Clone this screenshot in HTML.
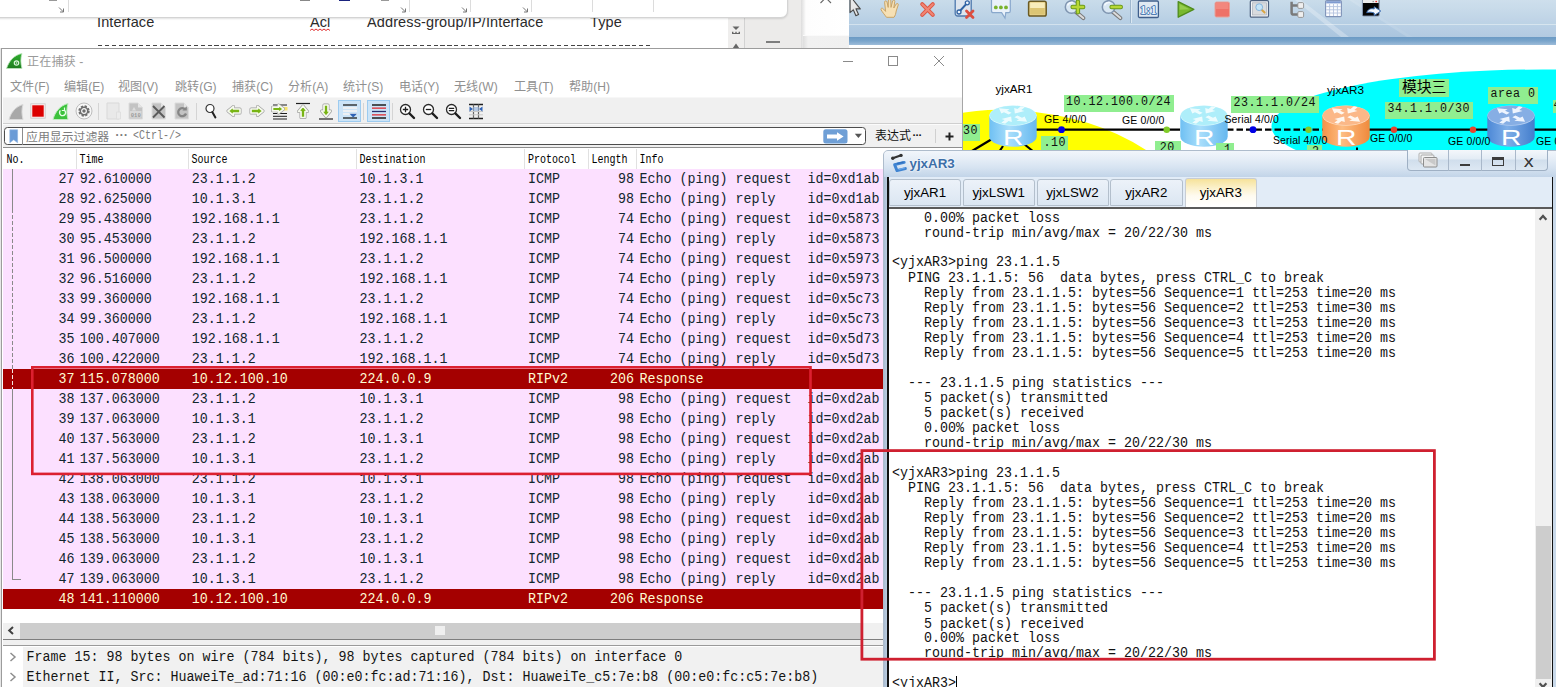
<!DOCTYPE html><html><head><meta charset="utf-8"><title>capture</title><style>
*{box-sizing:border-box;margin:0;padding:0}
html,body{width:1556px;height:687px;overflow:hidden;background:#fff}
body{position:relative;font-family:"Liberation Sans",sans-serif;font-size:12px;color:#000}
.a{position:absolute}
.mono{font-family:"Liberation Mono",monospace}
.sans{font-family:"Liberation Sans",sans-serif}
.serif{font-family:"Liberation Serif",serif}
/* packet list */
.pl{position:absolute;left:3px;top:169px;width:880px;height:440px;background:#fce0ff;overflow:hidden}
.row{position:absolute;left:0;width:880px;height:20px;font-family:"Liberation Mono",monospace;font-size:13.3333px;line-height:20px;color:#12272e;white-space:pre}
.row.red{background:#a40000;color:#fffbd2}
.row span{position:absolute;top:1px;height:20px;transform:scaleY(1.0875);transform-origin:0 50%}
.hd{position:absolute;top:150.3px;height:19px;font-family:"Liberation Mono",monospace;font-size:10px;line-height:19px;color:#000;white-space:pre;transform-origin:0 50%;transform:scaleY(1.2)}
.term{position:absolute;left:892px;top:211px;font-family:"Liberation Mono",monospace;font-size:13.3333px;line-height:13.7931px;color:#111;white-space:pre;transform:scaleY(1.0875);transform-origin:0 0}
.lbl{position:absolute;background:#90ee90;font-family:"Liberation Mono",monospace;color:#101010;white-space:pre}
.ifn{position:absolute;font-family:"Liberation Sans",sans-serif;font-size:10.5px;color:#000;white-space:pre;line-height:12px}
.dev{position:absolute;font-family:"Liberation Sans",sans-serif;font-size:11.7px;color:#000;white-space:pre;line-height:13px}
.tab{position:absolute;top:179px;height:27px;border:1px solid #b3bfcc;border-radius:3px 3px 0 0;background:linear-gradient(#ecf2f9,#dbe6f2);font-family:"Liberation Sans",sans-serif;font-size:13.33px;line-height:25px;text-align:center;color:#000}
</style></head><body>
<!-- sec_top -->
<div class="a" style="left:0;top:0;width:849px;height:48px;background:#ecebea"></div><div class="a" style="left:0;top:17px;width:728px;height:31px;background:#fff"></div><div class="a" style="left:728px;top:17px;width:17px;height:31px;background:#efeeed;border-right:1px solid #d2d2d2"></div><div class="a" style="left:801px;top:0;width:48px;height:48px;background:linear-gradient(90deg,#dcdcdc 0,#fdfdfd 5px,#fff 100%)"></div><div class="a" style="left:803px;top:35px;width:46px;height:13px;background:linear-gradient(90deg,#dedede 0,#f1f1f1 5px,#f0f0f0 100%);border-top:1px solid #fafafa"></div><div class="a" style="left:-2px;top:-2px;width:790px;height:19.5px;background:#fff;border:1px solid #d4d4d4;border-radius:0 0 7px 0;box-shadow:0 1px 2px rgba(0,0,0,.12)"></div><div class="a" style="left:68px;top:0;width:1px;height:12px;background:#dcdcdc"></div><div class="a" style="left:409px;top:0;width:1px;height:12px;background:#dcdcdc"></div><div class="a" style="left:470px;top:0;width:1px;height:12px;background:#dcdcdc"></div><div class="a" style="left:531px;top:0;width:1px;height:12px;background:#dcdcdc"></div><div class="a" style="left:592px;top:0;width:1px;height:12px;background:#dcdcdc"></div><div class="a" style="left:653px;top:0;width:1px;height:12px;background:#dcdcdc"></div><svg class="a" style="left:58px;top:7px" width="7" height="6" viewBox="0 0 7 6"><path d="M1 0.5L5.5 5M5.5 1.5V5H2" stroke="#777" stroke-width="1" fill="none"/></svg><svg class="a" style="left:400px;top:7px" width="7" height="6" viewBox="0 0 7 6"><path d="M1 0.5L5.5 5M5.5 1.5V5H2" stroke="#777" stroke-width="1" fill="none"/></svg><svg class="a" style="left:461px;top:7px" width="7" height="6" viewBox="0 0 7 6"><path d="M1 0.5L5.5 5M5.5 1.5V5H2" stroke="#777" stroke-width="1" fill="none"/></svg><svg class="a" style="left:522px;top:7px" width="7" height="6" viewBox="0 0 7 6"><path d="M1 0.5L5.5 5M5.5 1.5V5H2" stroke="#777" stroke-width="1" fill="none"/></svg><div class="a" style="left:49px;top:0;width:8px;height:1px;background:#999"></div><div class="a" style="left:300px;top:0;width:10px;height:1px;background:#888"></div><div class="a" style="left:339px;top:0;width:11px;height:1px;background:#1a237e"></div><div class="a" style="left:381px;top:0;width:8px;height:1px;background:#999"></div><div class="a sans" style="left:0;top:18px;width:728px;height:30px;overflow:hidden;font-size:14.5px;letter-spacing:0.1px;color:#2b2b2b;line-height:16px"><span class="a" style="left:97px;top:-4px">Interface</span><span class="a" style="left:310px;top:-4px">Acl</span><span class="a" style="left:367px;top:-4px;letter-spacing:0.12px">Address-group/IP/Interface</span><span class="a" style="left:590px;top:-4px">Type</span></div><svg class="a" style="left:310px;top:28px" width="22" height="4" viewBox="0 0 22 4"><path d="M0 2.5 L2 1 L4 2.5 L6 1 L8 2.5 L10 1 L12 2.5 L14 1 L16 2.5 L18 1 L20 2.5" stroke="#e03030" stroke-width="1" fill="none"/></svg><div class="a" style="left:98px;top:44.5px;width:552px;height:1.3px;background:repeating-linear-gradient(90deg,#444 0,#444 4.2px,transparent 4.2px,transparent 6.85px)"></div><svg class="a" style="left:731px;top:25px" width="10" height="24" viewBox="0 0 10 24"><path d="M1.5 1.5h7L5 5z" fill="#666"/><path d="M1 9V6.8h1.4V8H4.3V6.8h1.4V8H7.6V6.8H9V9z" fill="#666"/><path d="M5 18.5L8.5 23.5h-7z" fill="#666"/></svg><div class="a" style="left:766px;top:41px;width:14px;height:1.6px;background:#7d7d7d"></div><svg class="a" style="left:819px;top:0" width="14" height="4" viewBox="0 0 14 4"><path d="M1.5 3L5 -0.5M12 3L8.5 -0.5" stroke="#666" stroke-width="1.1" fill="none"/></svg>
<!-- sec_ensp -->
<div class="a" style="left:849px;top:0;width:707px;height:160px;background:#fff;overflow:hidden"><div class="a" style="left:0;top:0;width:707px;height:25px;background:linear-gradient(#c9dcea,#bdd3e6 60%,#b4cde3)"></div><div class="a" style="left:0;top:24px;width:707px;height:1px;background:#d3e2ee"></div><div class="a" style="left:0;top:25px;width:707px;height:12px;background:linear-gradient(#b3cce3,#aac5de)"></div><div class="a" style="left:0;top:37px;width:707px;height:8px;background:linear-gradient(#6b9ac4,#7aa5cb 50%,#9dbcd9)"></div><svg class="a" style="left:440px;top:0" width="267" height="37" viewBox="0 0 267 37"><path d="M6 0H12L60 37H52z" fill="#fff" opacity=".28"/><path d="M60 0H64L124 37H118z" fill="#fff" opacity=".15"/><path d="M64 0H267V37H124z" fill="#fff" opacity=".1"/></svg><div class="a" style="left:280.5px;top:0;width:1px;height:23px;background:#9fb8cf"></div><div class="a" style="left:281.5px;top:0;width:1px;height:23px;background:#dbe8f2"></div><svg class="a" style="left:0px;top:0" width="14" height="19" viewBox="0 0 14 19"><path d="M1 -4V12.6L4.3 9.8L6.9 15.8L9.6 14.6L7 8.9H11.3z" fill="#cfcfcf" stroke="#4a4a4a" stroke-width="1.1" stroke-linejoin="round"/><path d="M2 -2V10.4L4.6 8.2L7.4 14.4L8.3 14L5.5 7.8H8.8z" fill="#e9e9e9"/></svg><svg class="a" style="left:30px;top:0" width="22" height="19" viewBox="0 0 22 19"><path d="M7.5 17.3C5.5 14.5 3.2 12 2 9.6C1.7 8.2 3.2 7.6 4.3 8.8L6.6 11.4L5.6 2.2C5.5 .6 7.6 .3 8 1.9L9.2 7.4L9.4 -.5C9.5 -2 11.7 -2 11.8 -.5L12 7.4L13.6 1C14 -.4 16 0 15.8 1.5L14.8 8L17.2 4C18 2.8 19.8 3.7 19.2 5.1L17.2 11C16.8 14 16.2 15.6 15 17.3z" fill="#f6e0b4" stroke="#c9a467" stroke-width="1"/></svg><svg class="a" style="left:70px;top:1px" width="18" height="18" viewBox="0 0 18 18"><path d="M3.2 3.2L13.8 13.8M13.8 3.2L3.2 13.8" stroke="#dd5543" stroke-width="4" stroke-linecap="round"/><path d="M3.2 3.2L13.8 13.8M13.8 3.2L3.2 13.8" stroke="#f08674" stroke-width="2" stroke-linecap="round"/></svg><svg class="a" style="left:105px;top:0" width="22" height="20" viewBox="0 0 22 20"><rect x="1.2" y="-2" width="16" height="18" rx="2.5" fill="#dde5ee" stroke="#4d78ad" stroke-width="1.3"/><path d="M5 12L13.3 2.8" stroke="#2f62a3" stroke-width="2"/><circle cx="5" cy="12" r="2" fill="#eef4fb" stroke="#2f62a3" stroke-width="1.3"/><circle cx="13.3" cy="2.8" r="2" fill="#eef4fb" stroke="#2f62a3" stroke-width="1.3"/><path d="M12.5 11L19 17.5M19 11L12.5 17.5" stroke="#dc4e40" stroke-width="2.8" stroke-linecap="round"/></svg><svg class="a" style="left:141px;top:0" width="23" height="20" viewBox="0 0 23 20"><path d="M1.5 -2H20.3V11Q20.3 12.7 18.6 12.7H15.8L15 18L11.6 12.7H3.2Q1.5 12.7 1.5 11z" fill="#e9f1fa" stroke="#89a8cc" stroke-width="1.2"/><circle cx="5.8" cy="7.4" r="1.9" fill="#7ab32e"/><circle cx="10.9" cy="7.4" r="1.9" fill="#7ab32e"/><circle cx="16" cy="7.4" r="1.9" fill="#7ab32e"/></svg><svg class="a" style="left:178px;top:0" width="22" height="19" viewBox="0 0 22 19"><rect x="1.6" y="1.3" width="17.6" height="14.8" rx="1.8" fill="#e8d38c" stroke="#6b5a22" stroke-width="1.5"/><rect x="3.2" y="2.8" width="14.4" height="5.2" fill="#f7ecbb"/><rect x="3.2" y="8" width="14.4" height="6.4" fill="#dcc574"/></svg><svg class="a" style="left:215px;top:0" width="26" height="22" viewBox="0 0 26 22"><path d="M11.6 11.6L19.3 18" stroke="#7a7a7a" stroke-width="4.2" stroke-linecap="round"/><path d="M11.6 11.6L19.3 18" stroke="#dcdcdc" stroke-width="2" stroke-linecap="round"/><circle cx="7.6" cy="7" r="6.3" fill="#d9e7f3" stroke="#7f95b0" stroke-width="1.5"/><path d="M3.5 5.5A4.6 4.6 0 0 1 9 2.6" stroke="#f4f9fd" stroke-width="1.6" fill="none"/><path d="M8.6 7H19.2M13.9 1.7V12.3" stroke="#6a9a1e" stroke-width="4.4" stroke-linecap="round"/><path d="M8.6 7H19.2M13.9 1.7V12.3" stroke="#b7d736" stroke-width="2.4" stroke-linecap="round"/></svg><svg class="a" style="left:251.5999999999999px;top:0" width="26" height="22" viewBox="0 0 26 22"><path d="M11.6 11.6L19.3 18" stroke="#7a7a7a" stroke-width="4.2" stroke-linecap="round"/><path d="M11.6 11.6L19.3 18" stroke="#dcdcdc" stroke-width="2" stroke-linecap="round"/><circle cx="7.6" cy="7" r="6.3" fill="#d9e7f3" stroke="#7f95b0" stroke-width="1.5"/><path d="M3.5 5.5A4.6 4.6 0 0 1 9 2.6" stroke="#f4f9fd" stroke-width="1.6" fill="none"/><path d="M10.6 7H19.8" stroke="#6a9a1e" stroke-width="4.4" stroke-linecap="round"/><path d="M10.6 7H19.8" stroke="#b7d736" stroke-width="2.4" stroke-linecap="round"/></svg><svg class="a" style="left:288px;top:0" width="24" height="20" viewBox="0 0 24 20"><rect x="1.4" y="1" width="20" height="16.5" rx="1.2" fill="#e0e9f3" stroke="#3f5f8c" stroke-width="1.3"/><text x="11.4" y="13.6" font-family="Liberation Serif, serif" font-weight="bold" font-size="12.5" text-anchor="middle" fill="#2f66a8" stroke="#2f66a8" stroke-width="1.5" stroke-linejoin="round">1:1</text><text x="11.4" y="13.6" font-family="Liberation Serif, serif" font-weight="bold" font-size="12.5" text-anchor="middle" fill="#eaf3fc">1:1</text></svg><svg class="a" style="left:327px;top:0" width="20" height="20" viewBox="0 0 20 20"><path d="M2.2 1.6L17.8 9.4L2.2 17.2z" fill="#79b82e" stroke="#4f8c1c" stroke-width="1.3" stroke-linejoin="round"/><path d="M3.6 4L13.5 9.2L3.6 9.8z" fill="#9fd45a" opacity=".75"/></svg><svg class="a" style="left:365px;top:1px" width="17" height="18" viewBox="0 0 17 18"><rect x="1" y="1" width="14.5" height="15" rx="1.5" fill="#ee7268" stroke="#e7a39b" stroke-width="1"/><rect x="2" y="2" width="12.5" height="6" fill="#f28c82" opacity=".8"/></svg><svg class="a" style="left:400px;top:0" width="21" height="20" viewBox="0 0 21 20"><rect x="1.3" y=".6" width="18.2" height="16.6" rx="1.2" fill="#f4f6f9" stroke="#4d617f" stroke-width="1.2"/><rect x="3.4" y="2.8" width="14" height="12.2" fill="#d9dbde" stroke="#a9afb8" stroke-width=".7"/><path d="M12.4 9.6L15.6 12.6" stroke="#d9a441" stroke-width="2" stroke-linecap="round"/><circle cx="10.2" cy="7.2" r="3.4" fill="#c4e4f8" stroke="#86b4dc" stroke-width="1"/></svg><svg class="a" style="left:439px;top:0" width="20" height="20" viewBox="0 0 20 20"><path d="M3.6 1.8V12.5Q3.6 14.6 5.7 14.6H10.5M3.6 5.6H10.5" stroke="#7a7a7a" stroke-width="2.5" fill="none"/><rect x="9.8" y="2.6" width="5.8" height="5.8" rx="1.2" fill="#efefef" stroke="#8f8f8f" stroke-width=".9"/><rect x="9.8" y="11.6" width="5.8" height="5.8" rx="1.2" fill="#efefef" stroke="#8f8f8f" stroke-width=".9"/></svg><svg class="a" style="left:475px;top:0" width="20" height="20" viewBox="0 0 20 20"><rect x="1.6" y=".6" width="15.8" height="16" rx="1.2" fill="#fbfcfe" stroke="#7f93b8" stroke-width="1.1"/><rect x="2.2" y="1.2" width="14.6" height="2.2" fill="#7f9bd0"/><path d="M5.6 4V16M9.5 4V16M13.4 4V16M2.2 6.6H16.8M2.2 9.8H16.8M2.2 13H16.8" stroke="#b4c3df" stroke-width=".9"/></svg><svg class="a" style="left:512px;top:0" width="22" height="20" viewBox="0 0 22 20"><rect x="1.4" y="-.5" width="16.8" height="16.6" rx="1.2" fill="#050505" stroke="#8a9cb8" stroke-width="1"/><rect x="1.9" y="0" width="15.8" height="3" fill="#ececec"/><rect x="14.4" y=".9" width="1.6" height="1.3" fill="#e33"/><rect x="11.6" y=".9" width="1.2" height="1.3" fill="#888"/><path d="M5.8 12.8C6.6 9.2 10 8 13.2 9V6.8L19.8 11L13.2 15.6V13C10.4 12 7.8 11.8 5.8 12.8z" fill="#f4f8fd" stroke="#3d6fb3" stroke-width="1"/></svg><svg class="a" style="left:0;top:45px" width="707" height="115" viewBox="849 45 707 115"><path d="M900 160V130Q960 108 1007 110Q1090 113 1146 150V160z" fill="#ffff00"/><ellipse cx="1543" cy="126.5" rx="271.5" ry="57" fill="#00ffff"/><path d="M1036 129.7H1180" stroke="#000" stroke-width="2.2"/><path d="M1227 129.7H1323" stroke="#000" stroke-width="2.2" stroke-dasharray="6.5 3"/><path d="M1369 129.7H1556" stroke="#000" stroke-width="2.2"/><path d="M992 139L972 151M1003 146L999 152M1024 144L1034 152" stroke="#000" stroke-width="2.2"/><path d="M1357 147.5V152" stroke="#000" stroke-width="2"/><circle cx="1061.5" cy="129.7" r="3.4" fill="#0000e6"/><circle cx="1166.7" cy="129.7" r="3.2" fill="#80cc28"/><circle cx="1253" cy="129.7" r="3.4" fill="#0000e6"/><circle cx="1308.5" cy="129.7" r="3.2" fill="#80cc28"/><circle cx="1394" cy="129.7" r="3.2" fill="#e8432e"/><circle cx="1473" cy="129.7" r="3.2" fill="#e8432e"/></svg><svg class="a" style="left:140px;top:104.5px" width="48" height="43" viewBox="0 0 48 43"><defs><linearGradient id="glb1" x1="0" x2="1" y1="0" y2="0"><stop offset="0" stop-color="#6fc0f3"/><stop offset="0.42" stop-color="#a8defb"/><stop offset="1" stop-color="#66b8ef"/></linearGradient></defs><path d="M0.3 10.5V31.5A23.7 10.3 0 0 0 47.7 31.5V10.5z" fill="url(#glb1)"/><ellipse cx="24" cy="10.6" rx="23.7" ry="10.1" fill="#d5f8fd"/><ellipse cx="24" cy="10.3" rx="23.2" ry="9.6" fill="#aeeefa"/><g transform="translate(24,10) scale(20,9.8) rotate(-8)" fill="#effdff" opacity=".97"><path transform="rotate(232)" d="M.2 -.11H.52V-.3L.98 0L.52 .3V.11H.2z"/><path transform="rotate(52)" d="M.2 -.11H.52V-.3L.98 0L.52 .3V.11H.2z"/><path transform="rotate(308)" d="M.98 -.11H.64V-.3L.18 0L.64 .3V.11H.98z"/><path transform="rotate(128)" d="M.98 -.11H.64V-.3L.18 0L.64 .3V.11H.98z"/></g><text transform="translate(24.3,40.3) scale(1.27,1)" x="0" y="0" font-family="Liberation Sans, sans-serif" font-size="22.3" fill="#fff" text-anchor="middle">R</text></svg><svg class="a" style="left:331px;top:104.5px" width="48" height="43" viewBox="0 0 48 43"><defs><linearGradient id="glb2" x1="0" x2="1" y1="0" y2="0"><stop offset="0" stop-color="#6fc0f3"/><stop offset="0.42" stop-color="#a8defb"/><stop offset="1" stop-color="#66b8ef"/></linearGradient></defs><path d="M0.3 10.5V31.5A23.7 10.3 0 0 0 47.7 31.5V10.5z" fill="url(#glb2)"/><ellipse cx="24" cy="10.6" rx="23.7" ry="10.1" fill="#d5f8fd"/><ellipse cx="24" cy="10.3" rx="23.2" ry="9.6" fill="#aeeefa"/><g transform="translate(24,10) scale(20,9.8) rotate(-8)" fill="#effdff" opacity=".97"><path transform="rotate(232)" d="M.2 -.11H.52V-.3L.98 0L.52 .3V.11H.2z"/><path transform="rotate(52)" d="M.2 -.11H.52V-.3L.98 0L.52 .3V.11H.2z"/><path transform="rotate(308)" d="M.98 -.11H.64V-.3L.18 0L.64 .3V.11H.98z"/><path transform="rotate(128)" d="M.98 -.11H.64V-.3L.18 0L.64 .3V.11H.98z"/></g><text transform="translate(24.3,40.3) scale(1.27,1)" x="0" y="0" font-family="Liberation Sans, sans-serif" font-size="22.3" fill="#fff" text-anchor="middle">R</text></svg><svg class="a" style="left:473px;top:104.5px" width="48" height="43" viewBox="0 0 48 43"><defs><linearGradient id="gor3" x1="0" x2="1" y1="0" y2="0"><stop offset="0" stop-color="#f59248"/><stop offset="0.42" stop-color="#fdbc82"/><stop offset="1" stop-color="#f08a3c"/></linearGradient></defs><path d="M0.3 10.5V31.5A23.7 10.3 0 0 0 47.7 31.5V10.5z" fill="url(#gor3)"/><ellipse cx="24" cy="10.6" rx="23.7" ry="10.1" fill="#fdd9ba"/><ellipse cx="24" cy="10.3" rx="23.2" ry="9.6" fill="#fbb888"/><g transform="translate(24,10) scale(20,9.8) rotate(-8)" fill="#fffaf4" opacity=".97"><path transform="rotate(232)" d="M.2 -.11H.52V-.3L.98 0L.52 .3V.11H.2z"/><path transform="rotate(52)" d="M.2 -.11H.52V-.3L.98 0L.52 .3V.11H.2z"/><path transform="rotate(308)" d="M.98 -.11H.64V-.3L.18 0L.64 .3V.11H.98z"/><path transform="rotate(128)" d="M.98 -.11H.64V-.3L.18 0L.64 .3V.11H.98z"/></g><text transform="translate(24.3,40.3) scale(1.27,1)" x="0" y="0" font-family="Liberation Sans, sans-serif" font-size="22.3" fill="#fff" text-anchor="middle">R</text></svg><svg class="a" style="left:638px;top:104.5px" width="48" height="43" viewBox="0 0 48 43"><defs><linearGradient id="gbl4" x1="0" x2="1" y1="0" y2="0"><stop offset="0" stop-color="#4c88d6"/><stop offset="0.42" stop-color="#7eaee8"/><stop offset="1" stop-color="#437dcc"/></linearGradient></defs><path d="M0.3 10.5V31.5A23.7 10.3 0 0 0 47.7 31.5V10.5z" fill="url(#gbl4)"/><ellipse cx="24" cy="10.6" rx="23.7" ry="10.1" fill="#b4cdf0"/><ellipse cx="24" cy="10.3" rx="23.2" ry="9.6" fill="#86aee4"/><g transform="translate(24,10) scale(20,9.8) rotate(-8)" fill="#f2f7ff" opacity=".97"><path transform="rotate(232)" d="M.2 -.11H.52V-.3L.98 0L.52 .3V.11H.2z"/><path transform="rotate(52)" d="M.2 -.11H.52V-.3L.98 0L.52 .3V.11H.2z"/><path transform="rotate(308)" d="M.98 -.11H.64V-.3L.18 0L.64 .3V.11H.98z"/><path transform="rotate(128)" d="M.98 -.11H.64V-.3L.18 0L.64 .3V.11H.98z"/></g><text transform="translate(24.3,40.3) scale(1.27,1)" x="0" y="0" font-family="Liberation Sans, sans-serif" font-size="22.3" fill="#fff" text-anchor="middle">R</text></svg><div class="lbl" style="left:111px;top:123.6px;width:20.3px;height:17.2px;font-size:11.6667px;line-height:15.799999999999999px;padding-left:3px;letter-spacing:0.5px;"><span style="display:inline-block;transform:scaleY(1.1);transform-origin:0 55%">30</span></div><div class="lbl" style="left:214.5px;top:94.5px;width:110px;height:17px;font-size:11.6667px;line-height:15.6px;padding-left:2.5px;letter-spacing:0.5px;"><span style="display:inline-block;transform:scaleY(1.1);transform-origin:0 55%">10.12.100.0/24</span></div><div class="lbl" style="left:191.5px;top:136.4px;width:27px;height:17.3px;font-size:11.6667px;line-height:15.9px;padding-left:3px;letter-spacing:0.5px;"><span style="display:inline-block;transform:scaleY(1.1);transform-origin:0 55%">.10</span></div><div class="lbl" style="left:305.79999999999995px;top:140.9px;width:26.5px;height:17.3px;font-size:11.6667px;line-height:15.9px;padding-left:5px;letter-spacing:0.5px;"><span style="display:inline-block;transform:scaleY(1.1);transform-origin:0 55%">20</span></div><div class="lbl" style="left:367px;top:143.3px;width:18px;height:17.3px;font-size:11.6667px;line-height:15.9px;padding-left:8px;letter-spacing:0.5px;"><span style="display:inline-block;transform:scaleY(1.1);transform-origin:0 55%">1</span></div><div class="lbl" style="left:382px;top:96px;width:87.5px;height:17px;font-size:11.6667px;line-height:15.6px;padding-left:2.5px;letter-spacing:0.5px;"><span style="display:inline-block;transform:scaleY(1.1);transform-origin:0 55%">23.1.1.0/24</span></div><div class="lbl" style="left:458px;top:144.8px;width:14.5px;height:17.3px;font-size:11.6667px;line-height:15.9px;padding-left:5px;letter-spacing:0.5px;"><span style="display:inline-block;transform:scaleY(1.1);transform-origin:0 55%">2</span></div><div class="lbl" style="left:536px;top:102px;width:88px;height:17px;font-size:11.6667px;line-height:15.6px;padding-left:2.5px;letter-spacing:0.5px;"><span style="display:inline-block;transform:scaleY(1.1);transform-origin:0 55%">34.1.1.0/30</span></div><div class="lbl" style="left:639px;top:87px;width:50px;height:17px;font-size:11.6667px;line-height:15.6px;padding-left:2.5px;letter-spacing:0.5px;"><span style="display:inline-block;transform:scaleY(1.1);transform-origin:0 55%">area 0</span></div><div class="lbl" style="left:703.5px;top:100px;width:10px;height:13px;font-size:11.6667px;line-height:11.6px;padding-left:1px;letter-spacing:0.5px;"><span style="display:inline-block;transform:scaleY(1.1);transform-origin:0 55%">4</span></div><div class="lbl" style="left:550px;top:79px;width:50px;height:17.5px"></div><svg style="position:absolute;left:552.8px;top:75.91px;overflow:visible" width="46.7" height="21.6" viewBox="0 -16.39 46.7 21.6"><text x="0" y="0" font-family="'Liberation Sans','Noto Sans CJK SC',sans-serif" font-size="14.8" fill="#000">模块三</text></svg><div class="ifn" style="left:195px;top:112.5px;letter-spacing:0.12px">GE 4/0/0</div><div class="ifn" style="left:273px;top:113.5px;letter-spacing:0.12px">GE 0/0/0</div><div class="ifn" style="left:375.5px;top:112.5px;letter-spacing:0.12px">Serial 4/0/0</div><div class="ifn" style="left:424px;top:133.5px;letter-spacing:0.12px">Serial 4/0/0</div><div class="ifn" style="left:521px;top:132px;letter-spacing:0.12px">GE 0/0/0</div><div class="ifn" style="left:599px;top:135px;letter-spacing:0.12px">GE 0/0/0</div><div class="ifn" style="left:687px;top:135px;letter-spacing:0.12px">GE 0/0/0</div><div class="dev" style="left:146.5px;top:82px">yjxAR1</div><div class="dev" style="left:478px;top:83px">yjxAR3</div></div>
<!-- sec_ws -->
<div class="a" style="left:0;top:48px;width:2px;height:639px;background:#e6e6e6"></div><div class="a" style="left:1px;top:48px;width:961.5px;height:640px;background:#fff;border:1px solid #9c9c9c;border-right-color:#a6a6a6"></div><svg class="a" style="left:5px;top:52px" width="19" height="19" viewBox="0 0 19 19"><defs><linearGradient id="fin" x1="0" y1="0" x2="0" y2="1"><stop offset="0" stop-color="#2fae2f"/><stop offset="1" stop-color="#1d7d1d"/></linearGradient></defs><path d="M1.5 16.5C4 9 9 3 17 1.5C15.5 6 15.5 11 17 16.5z" fill="url(#fin)" stroke="#bfe6bf" stroke-width=".8"/><circle cx="11.5" cy="11" r="2.2" fill="none" stroke="#d8f5d8" stroke-width="1.2"/><circle cx="11.5" cy="11" r=".8" fill="#d8f5d8"/></svg><svg style="position:absolute;left:27px;top:52.88px;overflow:visible" width="57.8" height="17.7" viewBox="0 -13.42 57.8 17.7"><text x="0" y="0" font-family="'Liberation Sans','Noto Sans CJK SC',sans-serif" font-size="12.2" fill="#9a9a9a">正在捕获 -</text></svg><div class="a" style="left:843px;top:61px;width:10px;height:1px;background:#8a8a8a"></div><div class="a" style="left:888px;top:56px;width:10px;height:10px;border:1px solid #8a8a8a"></div><svg class="a" style="left:933px;top:55px" width="12" height="12" viewBox="0 0 12 12"><path d="M1 1L11 11M11 1L1 11" stroke="#8a8a8a" stroke-width="1"/></svg><svg style="position:absolute;left:9.5px;top:77.99px;overflow:visible" width="41.1" height="17.5" viewBox="0 -13.31 41.1 17.5"><text x="0" y="0" font-family="'Liberation Sans','Noto Sans CJK SC',sans-serif" font-size="12.1" fill="#909090">文件(F)</text></svg><svg style="position:absolute;left:63.5px;top:77.99px;overflow:visible" width="41.5" height="17.5" viewBox="0 -13.31 41.5 17.5"><text x="0" y="0" font-family="'Liberation Sans','Noto Sans CJK SC',sans-serif" font-size="12.1" fill="#909090">编辑(E)</text></svg><svg style="position:absolute;left:118.0px;top:77.99px;overflow:visible" width="41.3" height="17.5" viewBox="0 -13.31 41.3 17.5"><text x="0" y="0" font-family="'Liberation Sans','Noto Sans CJK SC',sans-serif" font-size="12.1" fill="#909090">视图(V)</text></svg><svg style="position:absolute;left:174.5px;top:77.99px;overflow:visible" width="42.7" height="17.5" viewBox="0 -13.31 42.7 17.5"><text x="0" y="0" font-family="'Liberation Sans','Noto Sans CJK SC',sans-serif" font-size="12.1" fill="#909090">跳转(G)</text></svg><svg style="position:absolute;left:231.5px;top:77.99px;overflow:visible" width="42.1" height="17.5" viewBox="0 -13.31 42.1 17.5"><text x="0" y="0" font-family="'Liberation Sans','Noto Sans CJK SC',sans-serif" font-size="12.1" fill="#909090">捕获(C)</text></svg><svg style="position:absolute;left:287.5px;top:77.99px;overflow:visible" width="41.7" height="17.5" viewBox="0 -13.31 41.7 17.5"><text x="0" y="0" font-family="'Liberation Sans','Noto Sans CJK SC',sans-serif" font-size="12.1" fill="#909090">分析(A)</text></svg><svg style="position:absolute;left:343.0px;top:77.99px;overflow:visible" width="41.6" height="17.5" viewBox="0 -13.31 41.6 17.5"><text x="0" y="0" font-family="'Liberation Sans','Noto Sans CJK SC',sans-serif" font-size="12.1" fill="#909090">统计(S)</text></svg><svg style="position:absolute;left:398.5px;top:77.99px;overflow:visible" width="40.8" height="17.5" viewBox="0 -13.31 40.8 17.5"><text x="0" y="0" font-family="'Liberation Sans','Noto Sans CJK SC',sans-serif" font-size="12.1" fill="#909090">电话(Y)</text></svg><svg style="position:absolute;left:453.5px;top:77.99px;overflow:visible" width="45.0" height="17.5" viewBox="0 -13.31 45.0 17.5"><text x="0" y="0" font-family="'Liberation Sans','Noto Sans CJK SC',sans-serif" font-size="12.1" fill="#909090">无线(W)</text></svg><svg style="position:absolute;left:513.5px;top:77.99px;overflow:visible" width="41.6" height="17.5" viewBox="0 -13.31 41.6 17.5"><text x="0" y="0" font-family="'Liberation Sans','Noto Sans CJK SC',sans-serif" font-size="12.1" fill="#909090">工具(T)</text></svg><svg style="position:absolute;left:568.5px;top:77.99px;overflow:visible" width="43.2" height="17.5" viewBox="0 -13.31 43.2 17.5"><text x="0" y="0" font-family="'Liberation Sans','Noto Sans CJK SC',sans-serif" font-size="12.1" fill="#909090">帮助(H)</text></svg><div class="a" style="left:2.5px;top:97px;width:959px;height:1.5px;background:#f7f7f7"></div><div class="a" style="left:2.5px;top:98.3px;width:959px;height:25px;background:#f0f0f0"></div><div class="a" style="left:2.5px;top:122.6px;width:959px;height:1px;background:#cfcfcf"></div><div class="a" style="left:2.5px;top:123.6px;width:959px;height:1.2px;background:#fbfbfb"></div><div class="a" style="left:2.5px;top:124.7px;width:959px;height:23px;background:#f0f0f0"></div><svg class="a" style="left:8px;top:103px" width="17" height="18" viewBox="0 0 17 18"><path d="M1 16.5C3 9.5 7.5 3.5 15 1.5C13.6 6 13.6 11 15 16.5z" fill="#a8a8a8" stroke="#d9d9d9" stroke-width="1"/></svg><svg class="a" style="left:30px;top:103px" width="16" height="16" viewBox="0 0 16 16"><rect x=".8" y=".8" width="14.4" height="14.4" fill="#fbeaea" stroke="#c9c9c9" stroke-width=".8"/><rect x="2.3" y="2.3" width="11.4" height="11.4" fill="#dc0000"/></svg><svg class="a" style="left:52px;top:102px" width="18" height="19" viewBox="0 0 18 19"><path d="M1 17.5C3 10 8 3.5 16 1.5C14.5 6.5 14.5 12 16 17.5z" fill="#3cc23c" stroke="#bfeabf" stroke-width="1"/><path d="M12.3 8.2A3 3 0 1 1 8.4 8.6" stroke="#e8ffe8" stroke-width="1.4" fill="none"/><path d="M12.5 5.5V8.5H9.8" stroke="#e8ffe8" stroke-width="1.2" fill="none"/></svg><svg class="a" style="left:75px;top:102px" width="18" height="18" viewBox="0 0 18 18"><circle cx="9" cy="9" r="8" fill="#f7f7f7" stroke="#bdbdbd" stroke-width="1"/><circle cx="9" cy="9" r="4.7" fill="none" stroke="#6e6e6e" stroke-width="2" stroke-dasharray="2.2 1.5"/><circle cx="9" cy="9" r="3.7" fill="none" stroke="#6e6e6e" stroke-width="1.5"/><circle cx="9" cy="9" r="1.7" fill="#6e6e6e"/></svg><div class="a" style="left:98px;top:103px;width:1px;height:17px;background:#d4d4d4"></div><svg class="a" style="left:106px;top:102px" width="16" height="18" viewBox="0 0 16 18"><path d="M1 1H13V17H1z" fill="#e9e9e9" stroke="#d9d9d9" stroke-width="1"/><path d="M10.5 10H14.5V17H10.5z" fill="#ececec" stroke="#dcdcdc" stroke-width=".8"/></svg><svg class="a" style="left:128px;top:102px" width="16" height="18" viewBox="0 0 16 18"><path d="M1 1H10L14.5 5.5V17H1z" fill="#c3c3c3" stroke="#dcdcdc" stroke-width="1"/><path d="M10 1V5.5H14.5z" fill="#e4e4e4"/><rect x="2" y="9" width="11.5" height="6.5" fill="#d9d9d9"/><text x="7.8" y="14.6" font-family="Liberation Mono, monospace" font-size="5.6" font-weight="bold" text-anchor="middle" fill="#9a9a9a">010</text><path d="M4 8.5L6 5L8 8.5z" fill="#dedede"/></svg><svg class="a" style="left:151px;top:102px" width="16" height="18" viewBox="0 0 16 18"><path d="M1 1H10L14.5 5.5V17H1z" fill="#c3c3c3" stroke="#dcdcdc" stroke-width="1"/><path d="M10 1V5.5H14.5z" fill="#e4e4e4"/><path d="M2 4L13.5 15.5M13.5 4L2 15.5" stroke="#5a5a5a" stroke-width="1.9"/></svg><svg class="a" style="left:174px;top:102px" width="16" height="18" viewBox="0 0 16 18"><path d="M1 1H10L14.5 5.5V17H1z" fill="#c3c3c3" stroke="#dcdcdc" stroke-width="1"/><path d="M10 1V5.5H14.5z" fill="#e4e4e4"/><path d="M11.2 7.5A4 4 0 1 0 12 11.5" stroke="#858585" stroke-width="2.3" fill="none"/><path d="M12.8 4.2V8.6H8.4z" fill="#858585"/></svg><div class="a" style="left:196px;top:103px;width:1px;height:17px;background:#d4d4d4"></div><svg class="a" style="left:204px;top:102px" width="14" height="18" viewBox="0 0 14 18"><circle cx="6" cy="6.5" r="4" fill="#fff" stroke="#333" stroke-width="1.2"/><path d="M8.3 10L11.4 15.4" stroke="#222" stroke-width="2" stroke-linecap="round"/></svg><svg class="a" style="left:226px;top:104px" width="16" height="14" viewBox="0 0 16 14"><path d="M2 7L7.5 2.5V5H14V9H7.5V11.5z" fill="#7cb518" stroke="#9c9c9c" stroke-width="3" stroke-linejoin="round"/><path d="M2 7L7.5 2.5V5H14V9H7.5V11.5z" fill="#78b414" stroke="#f6f9ee" stroke-width="1.7" stroke-linejoin="round"/></svg><svg class="a" style="left:249px;top:104px" width="16" height="14" viewBox="0 0 16 14"><path d="M14 7L8.5 2.5V5H2V9H8.5V11.5z" fill="#7cb518" stroke="#9c9c9c" stroke-width="3" stroke-linejoin="round"/><path d="M14 7L8.5 2.5V5H2V9H8.5V11.5z" fill="#78b414" stroke="#f6f9ee" stroke-width="1.7" stroke-linejoin="round"/></svg><svg class="a" style="left:271px;top:102px" width="18" height="18" viewBox="0 0 18 18"><path d="M2 3H16M2 11.5H16M2 14.3H16M2 17H16" stroke="#1e1e1e" stroke-width="1"/><rect x="13" y="5" width="3.5" height="3.5" fill="#f5e36a"/><g transform="translate(-1,0)"><path d="M13.5 7L8.5 3V5.2H2.5V8.8H8.5V11z" fill="#7cb518" stroke="#9c9c9c" stroke-width="3" stroke-linejoin="round"/><path d="M13.5 7L8.5 3V5.2H2.5V8.8H8.5V11z" fill="#78b414" stroke="#f6f9ee" stroke-width="1.7" stroke-linejoin="round"/></g></svg><svg class="a" style="left:295px;top:102px" width="16" height="18" viewBox="0 0 16 18"><path d="M1 1.5H15" stroke="#1e1e1e" stroke-width="1.2"/><g transform="translate(1,2.5)"><path d="M7 1.5L11.5 7H9V13H5V7H2.5z" fill="#7cb518" stroke="#9c9c9c" stroke-width="3" stroke-linejoin="round"/><path d="M7 1.5L11.5 7H9V13H5V7H2.5z" fill="#78b414" stroke="#f6f9ee" stroke-width="1.7" stroke-linejoin="round"/></g></svg><svg class="a" style="left:318px;top:102px" width="16" height="18" viewBox="0 0 16 18"><path d="M1 17H15" stroke="#1e1e1e" stroke-width="1.2"/><g transform="translate(1,1)"><path d="M7 13.5L11.5 8H9V2H5V8H2.5z" fill="#7cb518" stroke="#9c9c9c" stroke-width="3" stroke-linejoin="round"/><path d="M7 13.5L11.5 8H9V2H5V8H2.5z" fill="#78b414" stroke="#f6f9ee" stroke-width="1.7" stroke-linejoin="round"/></g></svg><div class="a" style="left:338px;top:100px;width:23px;height:21.5px;background:#cce4f7;border:1px solid #9ccbf0"></div><svg class="a" style="left:342px;top:103px" width="16" height="17" viewBox="0 0 16 17"><path d="M1 2H15" stroke="#1e1e1e" stroke-width="1.3"/><path d="M1 5H15M1 8H15M1 11H15" stroke="#e8e8e8" stroke-width="1.6"/><path d="M1 5H15M1 8H15M1 11H15" stroke="#fff" stroke-width=".8"/><path d="M1 15H15" stroke="#1e1e1e" stroke-width="1.3"/><path d="M7.5 10.8H15L11.2 14.6z" fill="#2f62b5"/></svg><div class="a" style="left:363px;top:103px;width:1px;height:17px;background:#d4d4d4"></div><div class="a" style="left:367px;top:100px;width:23px;height:21.5px;background:#cce4f7;border:1px solid #9ccbf0"></div><svg class="a" style="left:371px;top:103px" width="16" height="17" viewBox="0 0 16 17"><path d="M1 2H15M1 15H15" stroke="#1e1e1e" stroke-width="1.3"/><path d="M1 5.2H15M1 11.8H15" stroke="#e0262c" stroke-width="1.3"/><path d="M1 8.5H15" stroke="#26306e" stroke-width="1.3"/></svg><div class="a" style="left:392px;top:103px;width:1px;height:17px;background:#d4d4d4"></div><svg class="a" style="left:399px;top:103px" width="17" height="17" viewBox="0 0 17 17"><circle cx="6.5" cy="6.5" r="5" fill="#fff" stroke="#2a2a2a" stroke-width="1.3"/><path d="M10.5 10.5L15 15" stroke="#1e1e1e" stroke-width="2.4" stroke-linecap="round"/><path d="M3.8 6.5H9.2M6.5 3.8V9.2" stroke="#1e1e1e" stroke-width="1.3"/></svg><svg class="a" style="left:422px;top:103px" width="17" height="17" viewBox="0 0 17 17"><circle cx="6.5" cy="6.5" r="5" fill="#fff" stroke="#2a2a2a" stroke-width="1.3"/><path d="M10.5 10.5L15 15" stroke="#1e1e1e" stroke-width="2.4" stroke-linecap="round"/><path d="M3.8 6.5H9.2" stroke="#1e1e1e" stroke-width="1.3"/></svg><svg class="a" style="left:445px;top:103px" width="17" height="17" viewBox="0 0 17 17"><circle cx="6.5" cy="6.5" r="5" fill="#fff" stroke="#2a2a2a" stroke-width="1.3"/><path d="M10.5 10.5L15 15" stroke="#1e1e1e" stroke-width="2.4" stroke-linecap="round"/><path d="M3.8 5.3H9.2M3.8 7.7H9.2" stroke="#1e1e1e" stroke-width="1.2"/></svg><svg class="a" style="left:468px;top:103px" width="16" height="17" viewBox="0 0 16 17"><path d="M1 1.5H15M1 15.5H15" stroke="#1e1e1e" stroke-width="1.3"/><path d="M5.5 1.5V15.5M10.5 1.5V15.5" stroke="#666" stroke-width="1.2"/><path d="M1 8.5H15M1 11.8H15" stroke="#c8c8c8" stroke-width="1"/><path d="M1.5 3.5L5 6L1.5 8.5zM14.5 3.5L11 6L14.5 8.5z" fill="#2f62b5"/><rect x="5" y="4" width="6" height="4" fill="#8fb0dd" opacity=".6"/></svg><div class="a" style="left:3.5px;top:126.8px;width:862px;height:18.6px;background:#fff;border:1.3px solid #4d4d4d;border-radius:3.5px"></div><svg class="a" style="left:8.5px;top:129px" width="10" height="15" viewBox="0 0 10 15"><path d="M.8 .8H8.6V13.8L4.7 10.8L.8 13.8z" fill="#6b9bd6" stroke="#8db3e2" stroke-width=".6"/></svg><div class="a" style="left:21.8px;top:128px;width:1px;height:16.5px;background:#8c8c8c"></div><svg style="position:absolute;left:26px;top:127.51px;overflow:visible" width="85.3" height="17.3" viewBox="0 -13.09 85.3 17.3"><text x="0" y="0" font-family="'Liberation Sans','Noto Sans CJK SC',sans-serif" font-size="11.9" fill="#7c7c7c">应用显示过滤器</text></svg><div class="a mono" style="left:113.5px;top:129px;font-size:12px;line-height:14px;color:#7c7c7c;letter-spacing:-3px;font-weight:bold">···</div><div class="a mono" style="left:133px;top:129.5px;font-size:10px;line-height:14px;color:#7c7c7c;transform-origin:0 50%;transform:scaleY(1.2);white-space:pre">&lt;Ctrl-/&gt;</div><svg class="a" style="left:822.5px;top:128.6px" width="26" height="15" viewBox="0 0 26 15"><rect x=".3" y=".3" width="24.2" height="14.2" rx="2.5" fill="#6f9fd6"/><path d="M4 5.6H14V3.2L20.6 7.5L14 11.8V9.4H4z" fill="#fff"/></svg><svg class="a" style="left:854px;top:133px" width="9" height="6" viewBox="0 0 9 6"><path d="M.8 .8H8L4.4 5z" fill="#555"/></svg><svg style="position:absolute;left:875px;top:127.40px;overflow:visible" width="38.0" height="17.4" viewBox="0 -13.20 38.0 17.4"><text x="0" y="0" font-family="'Liberation Sans','Noto Sans CJK SC',sans-serif" font-size="12" fill="#111">表达式</text></svg><div class="a mono" style="left:910.8px;top:127.6px;font-size:11px;line-height:14px;color:#111;letter-spacing:-3.6px;font-weight:bold">···</div><div class="a" style="left:935px;top:129px;width:1px;height:14px;background:#d0d0d0"></div><svg class="a" style="left:944.5px;top:131.5px" width="10" height="10" viewBox="0 0 10 10"><path d="M4.5 .5V8.5M.5 4.5H8.5" stroke="#222" stroke-width="2"/></svg><div class="a" style="left:2.5px;top:147.3px;width:959px;height:1.2px;background:#8e8e8e"></div><div class="a" style="left:3px;top:148.5px;width:880px;height:20.5px;background:#fff"></div><div class="a" style="left:76.0px;top:148.5px;width:1px;height:20.5px;background:#e1e1e1"></div><div class="a" style="left:188.0px;top:148.5px;width:1px;height:20.5px;background:#e1e1e1"></div><div class="a" style="left:356.0px;top:148.5px;width:1px;height:20.5px;background:#e1e1e1"></div><div class="a" style="left:524.0px;top:148.5px;width:1px;height:20.5px;background:#e1e1e1"></div><div class="a" style="left:588.0px;top:148.5px;width:1px;height:20.5px;background:#e1e1e1"></div><div class="a" style="left:636.0px;top:148.5px;width:1px;height:20.5px;background:#e1e1e1"></div><div class="hd" style="left:6.4px">No.</div><div class="hd" style="left:79.4px">Time</div><div class="hd" style="left:191.4px">Source</div><div class="hd" style="left:359.4px">Destination</div><div class="hd" style="left:527.9px">Protocol</div><div class="hd" style="left:591.4px">Length</div><div class="hd" style="left:639.4px">Info</div><div class="pl" style="left:3px"><div class="row" style="top:0px"><span style="right:808.6px">27</span><span style="left:76.7px">92.610000</span><span style="left:188.7px">23.1.1.2</span><span style="left:356.6px">10.1.3.1</span><span style="left:525.1px">ICMP</span><span style="right:249.1px">98</span><span style="left:636.6px">Echo (ping) request  id=0xd1ab</span></div><div class="row" style="top:20px"><span style="right:808.6px">28</span><span style="left:76.7px">92.625000</span><span style="left:188.7px">10.1.3.1</span><span style="left:356.6px">23.1.1.2</span><span style="left:525.1px">ICMP</span><span style="right:249.1px">98</span><span style="left:636.6px">Echo (ping) reply    id=0xd1ab</span></div><div class="row" style="top:40px"><span style="right:808.6px">29</span><span style="left:76.7px">95.438000</span><span style="left:188.7px">192.168.1.1</span><span style="left:356.6px">23.1.1.2</span><span style="left:525.1px">ICMP</span><span style="right:249.1px">74</span><span style="left:636.6px">Echo (ping) request  id=0x5873</span></div><div class="row" style="top:60px"><span style="right:808.6px">30</span><span style="left:76.7px">95.453000</span><span style="left:188.7px">23.1.1.2</span><span style="left:356.6px">192.168.1.1</span><span style="left:525.1px">ICMP</span><span style="right:249.1px">74</span><span style="left:636.6px">Echo (ping) reply    id=0x5873</span></div><div class="row" style="top:80px"><span style="right:808.6px">31</span><span style="left:76.7px">96.500000</span><span style="left:188.7px">192.168.1.1</span><span style="left:356.6px">23.1.1.2</span><span style="left:525.1px">ICMP</span><span style="right:249.1px">74</span><span style="left:636.6px">Echo (ping) request  id=0x5973</span></div><div class="row" style="top:100px"><span style="right:808.6px">32</span><span style="left:76.7px">96.516000</span><span style="left:188.7px">23.1.1.2</span><span style="left:356.6px">192.168.1.1</span><span style="left:525.1px">ICMP</span><span style="right:249.1px">74</span><span style="left:636.6px">Echo (ping) reply    id=0x5973</span></div><div class="row" style="top:120px"><span style="right:808.6px">33</span><span style="left:76.7px">99.360000</span><span style="left:188.7px">192.168.1.1</span><span style="left:356.6px">23.1.1.2</span><span style="left:525.1px">ICMP</span><span style="right:249.1px">74</span><span style="left:636.6px">Echo (ping) request  id=0x5c73</span></div><div class="row" style="top:140px"><span style="right:808.6px">34</span><span style="left:76.7px">99.360000</span><span style="left:188.7px">23.1.1.2</span><span style="left:356.6px">192.168.1.1</span><span style="left:525.1px">ICMP</span><span style="right:249.1px">74</span><span style="left:636.6px">Echo (ping) reply    id=0x5c73</span></div><div class="row" style="top:160px"><span style="right:808.6px">35</span><span style="left:76.7px">100.407000</span><span style="left:188.7px">192.168.1.1</span><span style="left:356.6px">23.1.1.2</span><span style="left:525.1px">ICMP</span><span style="right:249.1px">74</span><span style="left:636.6px">Echo (ping) request  id=0x5d73</span></div><div class="row" style="top:180px"><span style="right:808.6px">36</span><span style="left:76.7px">100.422000</span><span style="left:188.7px">23.1.1.2</span><span style="left:356.6px">192.168.1.1</span><span style="left:525.1px">ICMP</span><span style="right:249.1px">74</span><span style="left:636.6px">Echo (ping) reply    id=0x5d73</span></div><div class="row red" style="top:200px"><span style="right:808.6px">37</span><span style="left:76.7px">115.078000</span><span style="left:188.7px">10.12.100.10</span><span style="left:356.6px">224.0.0.9</span><span style="left:525.1px">RIPv2</span><span style="right:249.1px">206</span><span style="left:636.6px">Response</span></div><div class="row" style="top:220px"><span style="right:808.6px">38</span><span style="left:76.7px">137.063000</span><span style="left:188.7px">23.1.1.2</span><span style="left:356.6px">10.1.3.1</span><span style="left:525.1px">ICMP</span><span style="right:249.1px">98</span><span style="left:636.6px">Echo (ping) request  id=0xd2ab</span></div><div class="row" style="top:240px"><span style="right:808.6px">39</span><span style="left:76.7px">137.063000</span><span style="left:188.7px">10.1.3.1</span><span style="left:356.6px">23.1.1.2</span><span style="left:525.1px">ICMP</span><span style="right:249.1px">98</span><span style="left:636.6px">Echo (ping) reply    id=0xd2ab</span></div><div class="row" style="top:260px"><span style="right:808.6px">40</span><span style="left:76.7px">137.563000</span><span style="left:188.7px">23.1.1.2</span><span style="left:356.6px">10.1.3.1</span><span style="left:525.1px">ICMP</span><span style="right:249.1px">98</span><span style="left:636.6px">Echo (ping) request  id=0xd2ab</span></div><div class="row" style="top:280px"><span style="right:808.6px">41</span><span style="left:76.7px">137.563000</span><span style="left:188.7px">10.1.3.1</span><span style="left:356.6px">23.1.1.2</span><span style="left:525.1px">ICMP</span><span style="right:249.1px">98</span><span style="left:636.6px">Echo (ping) reply    id=0xd2ab</span></div><div class="row" style="top:300px"><span style="right:808.6px">42</span><span style="left:76.7px">138.063000</span><span style="left:188.7px">23.1.1.2</span><span style="left:356.6px">10.1.3.1</span><span style="left:525.1px">ICMP</span><span style="right:249.1px">98</span><span style="left:636.6px">Echo (ping) request  id=0xd2ab</span></div><div class="row" style="top:320px"><span style="right:808.6px">43</span><span style="left:76.7px">138.063000</span><span style="left:188.7px">10.1.3.1</span><span style="left:356.6px">23.1.1.2</span><span style="left:525.1px">ICMP</span><span style="right:249.1px">98</span><span style="left:636.6px">Echo (ping) reply    id=0xd2ab</span></div><div class="row" style="top:340px"><span style="right:808.6px">44</span><span style="left:76.7px">138.563000</span><span style="left:188.7px">23.1.1.2</span><span style="left:356.6px">10.1.3.1</span><span style="left:525.1px">ICMP</span><span style="right:249.1px">98</span><span style="left:636.6px">Echo (ping) request  id=0xd2ab</span></div><div class="row" style="top:360px"><span style="right:808.6px">45</span><span style="left:76.7px">138.563000</span><span style="left:188.7px">10.1.3.1</span><span style="left:356.6px">23.1.1.2</span><span style="left:525.1px">ICMP</span><span style="right:249.1px">98</span><span style="left:636.6px">Echo (ping) reply    id=0xd2ab</span></div><div class="row" style="top:380px"><span style="right:808.6px">46</span><span style="left:76.7px">139.063000</span><span style="left:188.7px">23.1.1.2</span><span style="left:356.6px">10.1.3.1</span><span style="left:525.1px">ICMP</span><span style="right:249.1px">98</span><span style="left:636.6px">Echo (ping) request  id=0xd2ab</span></div><div class="row" style="top:400px"><span style="right:808.6px">47</span><span style="left:76.7px">139.063000</span><span style="left:188.7px">10.1.3.1</span><span style="left:356.6px">23.1.1.2</span><span style="left:525.1px">ICMP</span><span style="right:249.1px">98</span><span style="left:636.6px">Echo (ping) reply    id=0xd2ab</span></div><div class="row red" style="top:420px"><span style="right:808.6px">48</span><span style="left:76.7px">141.110000</span><span style="left:188.7px">10.12.100.10</span><span style="left:356.6px">224.0.0.9</span><span style="left:525.1px">RIPv2</span><span style="right:249.1px">206</span><span style="left:636.6px">Response</span></div><div class="a" style="left:9px;top:0;width:1px;height:40px;background:#8a8a8a"></div><div class="a" style="left:9px;top:40px;width:1px;height:160px;background:repeating-linear-gradient(#8a8a8a 0,#8a8a8a 4px,transparent 4px,transparent 6px)"></div><div class="a" style="left:9px;top:200px;width:1px;height:20px;background:repeating-linear-gradient(#f6e4e0 0,#f6e4e0 4px,transparent 4px,transparent 6px)"></div><div class="a" style="left:9px;top:220px;width:1px;height:191px;background:#8a8a8a"></div><div class="a" style="left:9px;top:410px;width:9px;height:1px;background:#8a8a8a"></div></div><div class="a" style="left:3px;top:609px;width:880px;height:14px;background:#fff"></div><div class="a" style="left:3px;top:623px;width:880px;height:15.6px;background:#f0f0f0"></div><div class="a" style="left:20px;top:623px;width:842px;height:15.6px;background:#cdcdcd"></div><div class="a" style="left:435px;top:626px;width:10px;height:9px;background:#efefef"></div><svg class="a" style="left:7px;top:626px" width="8" height="9" viewBox="0 0 8 9"><path d="M6 1L2.2 4.5L6 8" stroke="#404040" stroke-width="2" fill="none"/></svg><div class="a" style="left:2.5px;top:638.6px;width:880.5px;height:1.2px;background:#7e7e7e"></div><div class="a" style="left:2.5px;top:639.8px;width:880.5px;height:5px;background:#f0f0f0"></div><div class="a" style="left:2.5px;top:644.8px;width:880.5px;height:1.2px;background:#9a9a9a"></div><div class="a" style="left:3px;top:645.5px;width:880px;height:42px;background:#fff"></div><div class="a" style="left:23.2px;top:646.5px;width:860px;height:41px;background:#f1f1f1"></div><svg class="a" style="left:9px;top:651.8000000000001px" width="8" height="10" viewBox="0 0 8 10"><path d="M1.5 1L6 5L1.5 9" stroke="#8e8e8e" stroke-width="1.5" fill="none"/></svg><div class="a mono" style="left:26.5px;top:648.2px;height:20px;line-height:20px;font-size:13.3333px;color:#141414;white-space:pre;transform:scaleY(1.0875);transform-origin:0 50%">Frame 15: 98 bytes on wire (784 bits), 98 bytes captured (784 bits) on interface 0</div><svg class="a" style="left:9px;top:671.8000000000001px" width="8" height="10" viewBox="0 0 8 10"><path d="M1.5 1L6 5L1.5 9" stroke="#8e8e8e" stroke-width="1.5" fill="none"/></svg><div class="a mono" style="left:26.5px;top:668.2px;height:20px;line-height:20px;font-size:13.3333px;color:#141414;white-space:pre;transform:scaleY(1.0875);transform-origin:0 50%">Ethernet II, Src: HuaweiTe_ad:71:16 (00:e0:fc:ad:71:16), Dst: HuaweiTe_c5:7e:b8 (00:e0:fc:c5:7e:b8)</div>
<!-- sec_term -->
<div class="a" style="left:882.5px;top:150.3px;width:680px;height:540px;background:linear-gradient(90deg,#a9bdd3 0,#c8d7e7 5px,#d3e1f0 6px);border:1px solid #aebccc;border-radius:5px 0 0 0"></div><div class="a" style="left:883.5px;top:151.3px;width:673px;height:25.5px;border-radius:4px 0 0 0;background:linear-gradient(#f2f6fb 0,#e6eef7 30%,#d6e3f1 65%,#c2d4e8 100%)"></div><svg class="a" style="left:890px;top:153px" width="18" height="20" viewBox="0 0 18 20"><path d="M2.6 5.2L11.2 2.2" stroke="#333" stroke-width="2.2" stroke-linecap="round"/><circle cx="2.8" cy="5.3" r="1.7" fill="#333"/><circle cx="11" cy="2.4" r="1.7" fill="#333"/><path d="M14.2 9.4L4.6 11.6L7 17.6L15.4 15.6" stroke="#3f84d2" stroke-width="2.9" stroke-linecap="round" stroke-linejoin="round" fill="none"/><path d="M13 9.2L7.5 10.4" stroke="#2f6fbf" stroke-width="1.4" stroke-linecap="round"/><path d="M9 16.3L14.5 15" stroke="#6aa6ea" stroke-width="1.2" stroke-linecap="round"/></svg><div class="a sans" style="left:909.5px;top:155.5px;font-size:13.33px;font-weight:bold;color:#3d6fa8;line-height:16px;text-shadow:0 0 3px #fff,0 0 2px #fff">yjxAR3</div><div class="a" style="left:1407px;top:149.5px;width:140.5px;height:21.5px;border:1px solid #9fb0c4;border-top:none;border-radius:0 0 4px 4px;background:linear-gradient(#f4f7fb,#e3ecf5 45%,#d0deec 50%,#dde8f3)"></div><div class="a" style="left:1448px;top:150px;width:1px;height:20.5px;background:#a9b8ca"></div><div class="a" style="left:1481px;top:150px;width:1px;height:20.5px;background:#a9b8ca"></div><div class="a" style="left:1514.5px;top:150px;width:1px;height:20.5px;background:#a9b8ca"></div><svg class="a" style="left:1418px;top:152px" width="22" height="17" viewBox="0 0 22 17"><rect x="1" y="1" width="13" height="9" rx="1" fill="#f4f4f4" stroke="#b0b0b0"/><rect x="3" y="3" width="13" height="9" rx="1" fill="#f4f4f4" stroke="#a8a8a8"/><rect x="5.5" y="5.5" width="13.5" height="9.5" rx="1" fill="#e4e4e4" stroke="#8c8c8c"/><path d="M7 7H17.5V13.5z" fill="#c9c9c9"/></svg><div class="a" style="left:1459.5px;top:163.6px;width:10.5px;height:2.2px;background:#3c3c3c"></div><div class="a" style="left:1491.8px;top:157.2px;width:12.2px;height:9px;border:1.3px solid #3c3c3c;border-top-width:3px"></div><div class="a sans" style="left:1524.3px;top:154.6px;font-size:13.4px;line-height:16px;color:#3a3a3a;transform:scaleX(1.08);text-shadow:0.3px 0 0 #3a3a3a">X</div><div class="a" style="left:887px;top:176.8px;width:665px;height:31px;background:#e2ecf7"></div><div class="a" style="left:887px;top:176.8px;width:1.6px;height:511px;background:#111"></div><div class="a" style="left:1551.6px;top:176.8px;width:1.6px;height:511px;background:#111"></div><div class="a" style="left:1553.2px;top:176.8px;width:3px;height:511px;background:#c9d9ea"></div><div class="tab" style="left:889px;width:72px">yjxAR1</div><div class="tab" style="left:962.5px;width:72.5px">yjxLSW1</div><div class="tab" style="left:1036.5px;width:72px">yjxLSW2</div><div class="tab" style="left:1110px;width:72.5px">yjxAR2</div><div class="tab" style="left:1184.5px;width:72.5px;top:177.5px;height:29.5px;line-height:28.5px;border-color:#c8cdd4;border-bottom:none;background:linear-gradient(#f6e29a 0,#fbf0c8 30%,#fefbf0 60%,#fff 100%)">yjxAR3</div><div class="a" style="left:888.6px;top:207px;width:663px;height:1.6px;background:#5a5a5a"></div><div class="a" style="left:888.6px;top:208.6px;width:663px;height:480px;background:#fff"></div><div class="term">    0.00% packet loss
    round-trip min/avg/max = 20/22/30 ms

&lt;yjxAR3&gt;ping 23.1.1.5
  PING 23.1.1.5: 56  data bytes, press CTRL_C to break
    Reply from 23.1.1.5: bytes=56 Sequence=1 ttl=253 time=20 ms
    Reply from 23.1.1.5: bytes=56 Sequence=2 ttl=253 time=30 ms
    Reply from 23.1.1.5: bytes=56 Sequence=3 ttl=253 time=20 ms
    Reply from 23.1.1.5: bytes=56 Sequence=4 ttl=253 time=20 ms
    Reply from 23.1.1.5: bytes=56 Sequence=5 ttl=253 time=20 ms

  --- 23.1.1.5 ping statistics ---
    5 packet(s) transmitted
    5 packet(s) received
    0.00% packet loss
    round-trip min/avg/max = 20/22/30 ms

&lt;yjxAR3&gt;ping 23.1.1.5
  PING 23.1.1.5: 56  data bytes, press CTRL_C to break
    Reply from 23.1.1.5: bytes=56 Sequence=1 ttl=253 time=20 ms
    Reply from 23.1.1.5: bytes=56 Sequence=2 ttl=253 time=20 ms
    Reply from 23.1.1.5: bytes=56 Sequence=3 ttl=253 time=20 ms
    Reply from 23.1.1.5: bytes=56 Sequence=4 ttl=253 time=20 ms
    Reply from 23.1.1.5: bytes=56 Sequence=5 ttl=253 time=30 ms

  --- 23.1.1.5 ping statistics ---
    5 packet(s) transmitted
    5 packet(s) received
    0.00% packet loss
    round-trip min/avg/max = 20/22/30 ms

&lt;yjxAR3&gt;</div><div class="a" style="left:956px;top:676px;width:1px;height:12px;background:#000"></div><div class="a" style="left:1534.6px;top:208.6px;width:17px;height:480px;background:#f0f0f0"></div><div class="a" style="left:1535.6px;top:526px;width:15px;height:153px;background:#cdcdcd"></div><svg class="a" style="left:1538px;top:213px" width="10" height="8" viewBox="0 0 10 8"><path d="M1.6 6.8L5 3L8.4 6.8" stroke="#505050" stroke-width="2.2" fill="none"/></svg><svg class="a" style="left:1538px;top:682px" width="10" height="8" viewBox="0 0 10 8"><path d="M1.6 1.2L5 5L8.4 1.2" stroke="#505050" stroke-width="2.2" fill="none"/></svg>
<!-- sec_anno -->
<svg class="a" style="left:0;top:0" width="1556" height="687" viewBox="0 0 1556 687"><rect x="32.3" y="367.3" width="778.2" height="106.6" fill="none" stroke="#dc2030" stroke-width="2.6"/><rect x="861.9" y="450.6" width="572.5" height="208.6" fill="none" stroke="#cf2030" stroke-width="2.8"/></svg>
</body></html>
